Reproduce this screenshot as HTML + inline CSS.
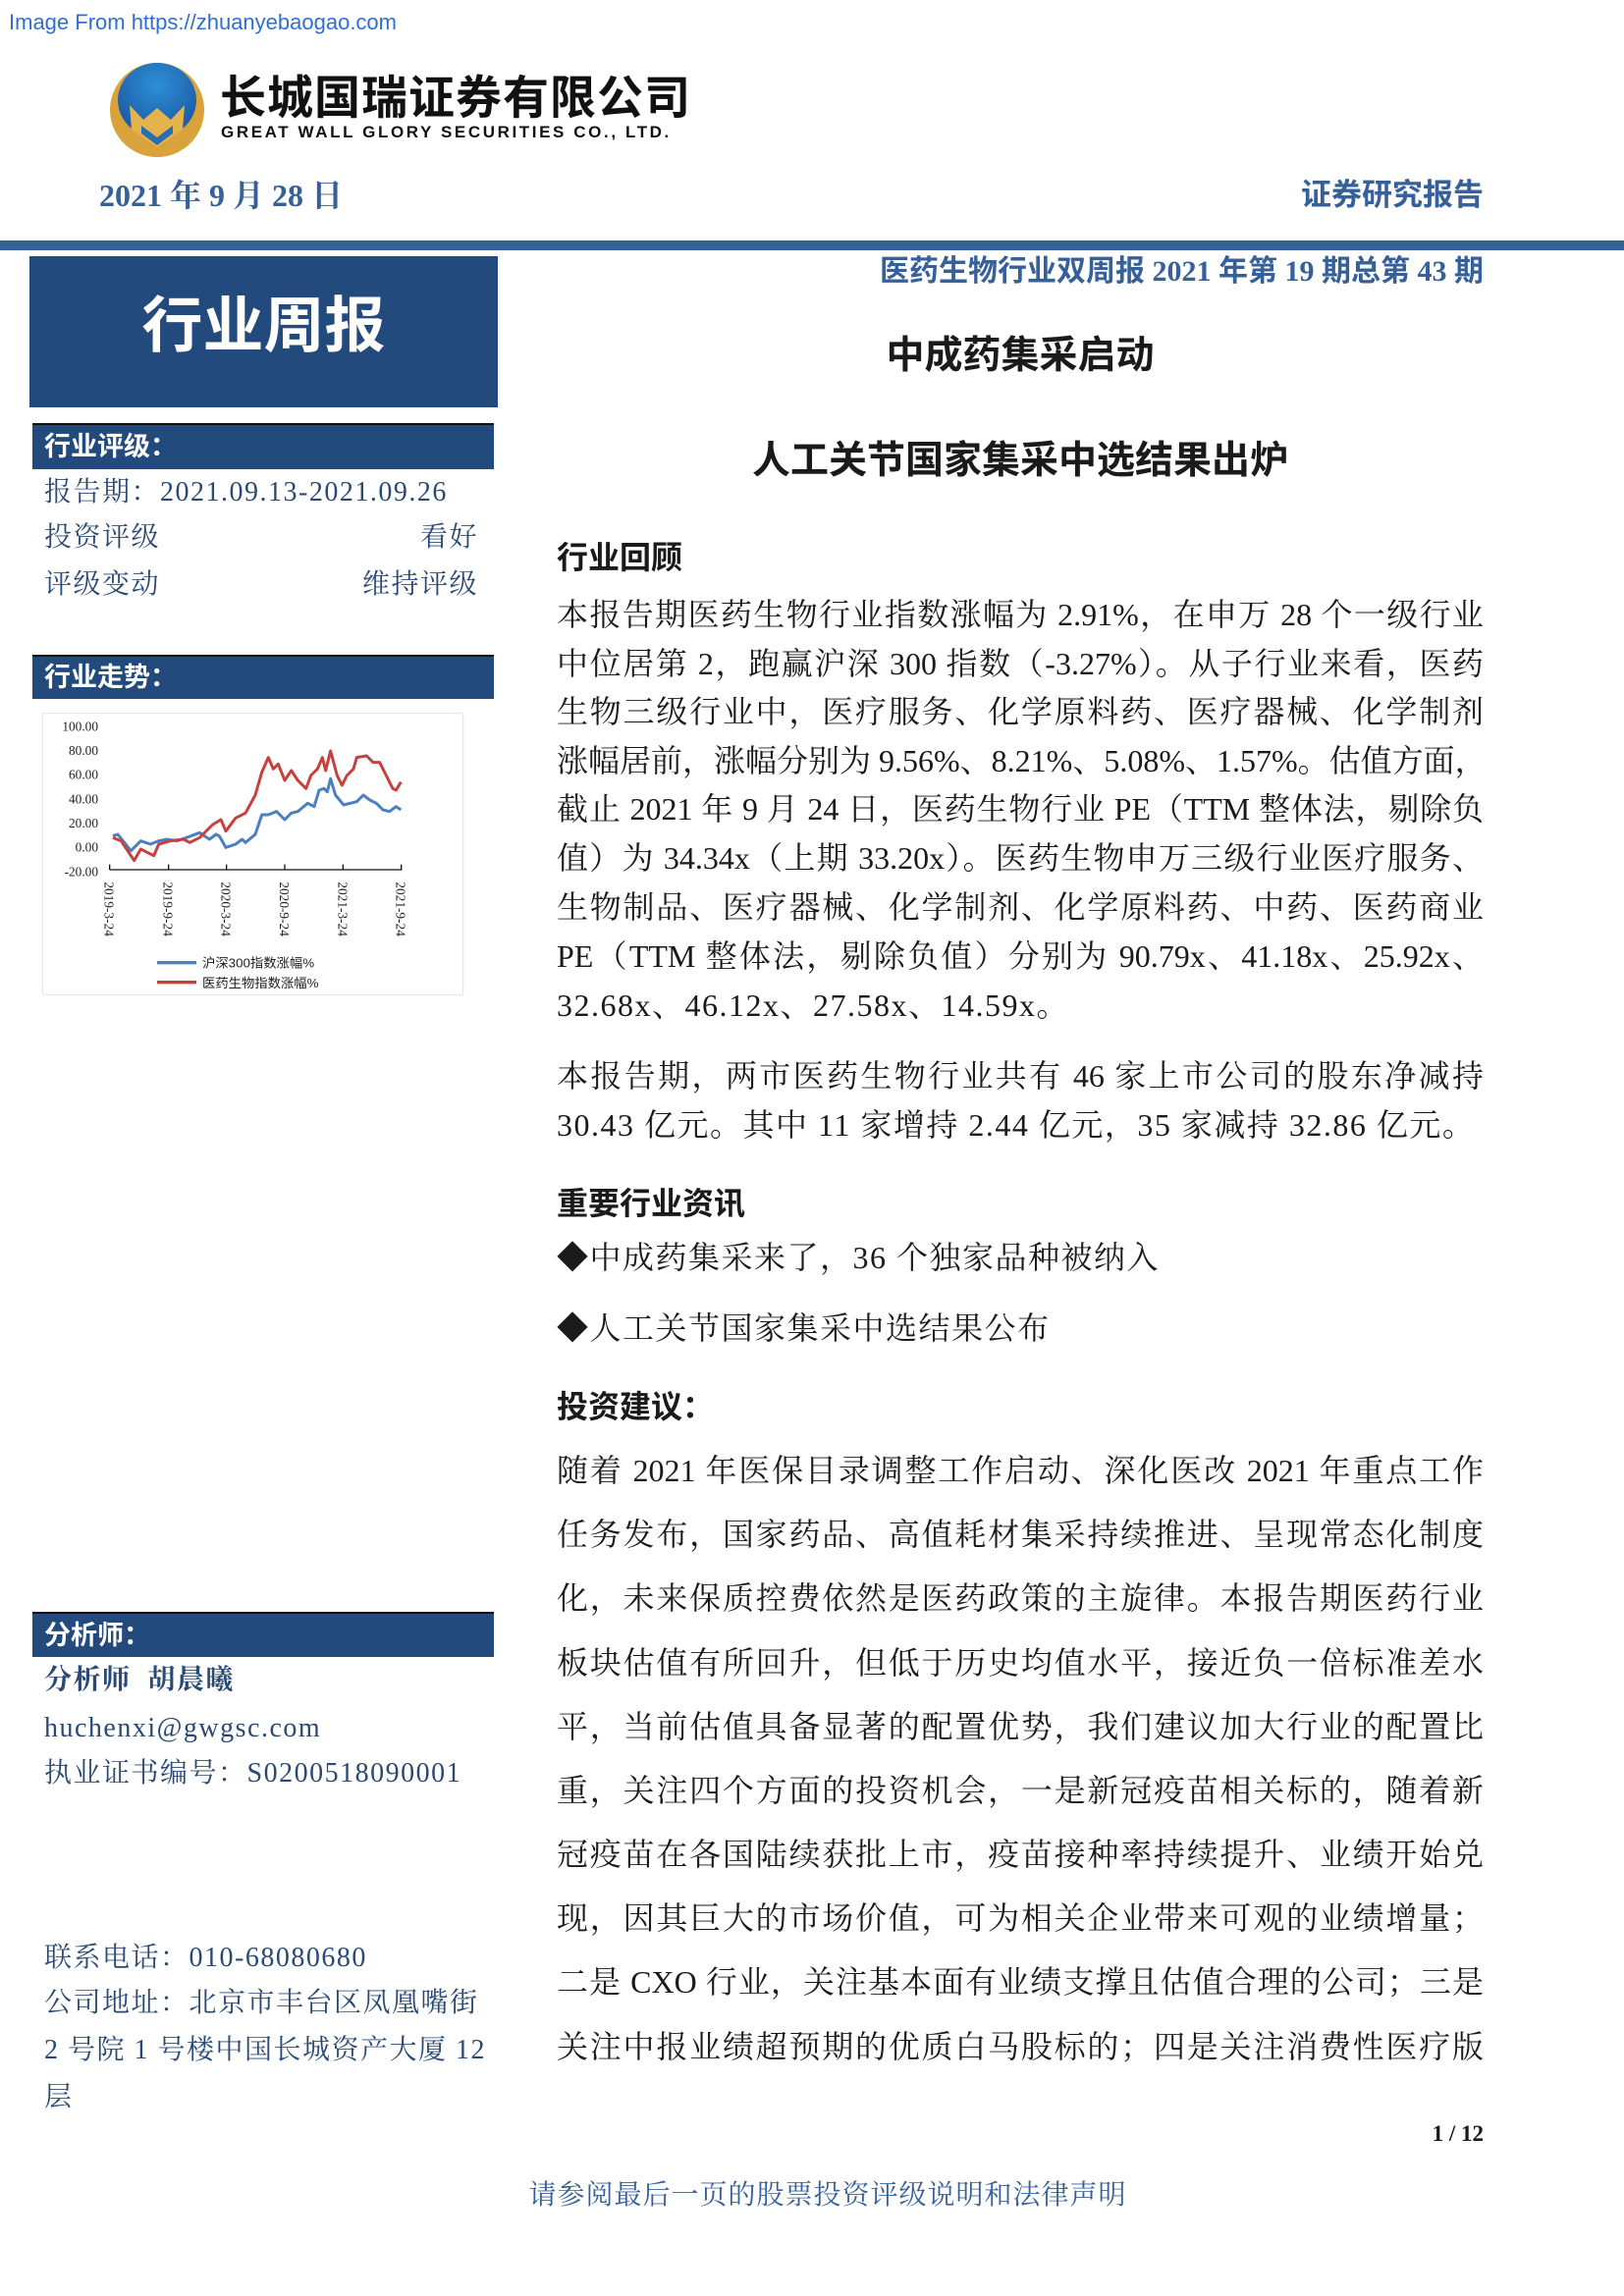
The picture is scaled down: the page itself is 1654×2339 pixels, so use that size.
<!DOCTYPE html>
<html><head><meta charset="utf-8"><style>
*{margin:0;padding:0;box-sizing:border-box}
body{width:1654px;height:2339px;background:#fff;position:relative;overflow:hidden;font-family:"Liberation Serif","Noto Serif CJK SC",serif;color:#1a1a1a}
.a{position:absolute;white-space:nowrap;line-height:1.2}
.sans{font-family:"Liberation Sans","Noto Sans CJK SC",sans-serif}
.bar{position:absolute;left:33px;width:470px;background:#234a7c;border-top:2px solid #111;color:#fff;font-family:"Liberation Sans","Noto Sans CJK SC",sans-serif;font-weight:bold;font-size:27px;padding-left:12px}
.lt{position:absolute;left:45px;font-size:28px;letter-spacing:1.5px;color:#2a4a75;white-space:nowrap;line-height:34px}
.ln{position:absolute;left:567px;width:944px;font-size:32px;text-align:justify;text-align-last:justify;white-space:nowrap;line-height:40px}
.ln.e{text-align-last:left;letter-spacing:1.5px}
.h{position:absolute;left:567px;font-family:"Liberation Sans","Noto Sans CJK SC",sans-serif;font-weight:bold;font-size:32px;line-height:40px}
</style></head><body>
<div class="a sans" style="left:9px;top:10px;font-size:22px;color:#2f6fd0">Image From https://zhuanyebaogao.com</div>
<svg class="a" style="left:110px;top:62px" width="100" height="100" viewBox="0 0 100 100">
<defs><radialGradient id="g" cx="50%" cy="30%" r="60%"><stop offset="0" stop-color="#2d8fd6"/><stop offset="1" stop-color="#1d5fa8"/></radialGradient></defs>
<circle cx="50" cy="50" r="48" fill="#d9a23a"/>
<ellipse cx="50" cy="40" rx="40" ry="38" fill="url(#g)"/>
<path d="M22 45 L36 60 L50 48 L64 60 L78 45 L76 70 L50 88 L24 70Z" fill="#e3b44c"/>
<path d="M34 66 L50 78 L66 66 L66 74 L50 86 L34 74Z" fill="#2a6db5"/>
</svg>
<div class="a sans" style="left:224px;top:76px;font-size:47px;line-height:48px;font-weight:bold;letter-spacing:1px;color:#111">长城国瑞证券有限公司</div>
<div class="a sans" style="left:225px;top:126px;font-size:17px;line-height:18px;font-weight:bold;letter-spacing:2.6px;color:#111">GREAT WALL GLORY SECURITIES CO., LTD.</div>
<div class="a" style="left:101px;top:180px;font-size:32px;font-weight:bold;color:#36609a">2021 年 9 月 28 日</div>
<div class="a sans" style="right:143px;top:180px;font-size:31px;font-weight:bold;color:#36609a">证券研究报告</div>
<div class="a" style="left:0;top:245px;width:1654px;height:10px;background:#36609a"></div>
<div class="a" style="left:30px;top:261px;width:477px;height:154px;background:#234a7c"></div>
<div class="a sans" style="left:30px;top:296px;width:477px;text-align:center;font-size:62px;font-weight:bold;color:#fff">行业周报</div>
<div class="a" style="right:143px;top:259px;font-size:30px;font-weight:bold;color:#36609a;font-family:'Liberation Serif','Noto Sans CJK SC',serif">医药生物行业双周报 2021 年第 19 期总第 43 期</div>
<div class="a sans" style="left:567px;width:944px;top:340px;text-align:center;font-size:39px;font-weight:bold">中成药集采启动</div>
<div class="a sans" style="left:567px;width:944px;top:447px;text-align:center;font-size:39px;font-weight:bold">人工关节国家集采中选结果出炉</div>

<div class="bar" style="top:431px;height:47px;line-height:45px">行业评级：</div>
<div class="lt" style="top:485px">报告期：2021.09.13-2021.09.26</div>
<div class="lt" style="top:531px">投资评级</div><div class="lt" style="top:531px;left:auto;right:1167px">看好</div>
<div class="lt" style="top:579px">评级变动</div><div class="lt" style="top:579px;left:auto;right:1167px">维持评级</div>

<div class="bar" style="top:667px;height:45px;line-height:43px">行业走势：</div>
<svg class="a" style="left:30px;top:700px" width="460" height="330" viewBox="0 0 1380 990">
<rect x="40" y="80" width="1285" height="860" fill="#fff" stroke="#e4e4e4" stroke-width="3"/>
<g font-family="Liberation Serif,serif" font-size="40" fill="#222" text-anchor="end">
<text x="210" y="133">100.00</text><text x="210" y="207">80.00</text><text x="210" y="281">60.00</text><text x="210" y="355">40.00</text><text x="210" y="429">20.00</text><text x="210" y="503">0.00</text><text x="210" y="577">-20.00</text></g>
<path d="M245 558 H1138 M245 542v16 M425 542v16 M602 542v16 M780 542v16 M958 542v16 M1136 542v16" stroke="#111" stroke-width="4" fill="none"/>
<g font-family="Liberation Serif,serif" font-size="40" fill="#222">
<text transform="translate(230,595) rotate(90)">2019-3-24</text><text transform="translate(410,595) rotate(90)">2019-9-24</text><text transform="translate(587,595) rotate(90)">2020-3-24</text><text transform="translate(765,595) rotate(90)">2020-9-24</text><text transform="translate(943,595) rotate(90)">2021-3-24</text><text transform="translate(1121,595) rotate(90)">2021-9-24</text></g>
<polyline fill="none" stroke="#4a7fc0" stroke-width="9" stroke-linejoin="round" points="255,455 270,450 310,500 340,470 370,480 395,470 420,465 450,470 480,460 520,445 550,465 570,450 580,455 600,490 630,480 650,465 660,475 690,450 710,390 730,390 755,380 780,405 800,385 820,380 850,355 870,365 885,315 900,310 910,320 920,280 935,330 960,360 980,355 1000,350 1020,330 1040,345 1060,355 1080,375 1100,380 1120,365 1135,375"/>
<polyline fill="none" stroke="#c8403e" stroke-width="9" stroke-linejoin="round" points="255,460 280,470 320,530 340,495 380,515 395,480 430,470 470,465 490,475 520,460 560,420 585,405 600,440 630,400 660,385 690,330 710,260 730,215 745,250 760,235 780,285 800,255 820,285 845,310 860,270 880,250 895,215 905,255 920,195 940,270 955,300 970,270 990,250 1000,215 1030,210 1050,230 1070,230 1090,270 1110,310 1120,315 1135,290"/>
<path d="M390 842h120" stroke="#4a7fc0" stroke-width="10"/><path d="M390 902h120" stroke="#c8403e" stroke-width="10"/>
<g font-family="Liberation Sans,Noto Sans CJK SC,sans-serif" font-size="40" fill="#222"><text x="528" y="857">沪深300指数涨幅%</text><text x="528" y="918">医药生物指数涨幅%</text></g>
</svg>

<div class="bar" style="top:1642px;height:46px;line-height:44px">分析师：</div>
<div class="lt" style="top:1695px;font-weight:bold">分析师&nbsp;&nbsp;胡晨曦</div>
<div class="lt" style="top:1744px">huchenxi@gwgsc.com</div>
<div class="lt" style="top:1790px">执业证书编号：S0200518090001</div>
<div class="lt" style="top:1978px">联系电话：010-68080680</div>
<div class="lt" style="top:2024px">公司地址：北京市丰台区凤凰嘴街</div>
<div class="lt" style="top:2072px">2 号院 1 号楼中国长城资产大厦 12</div>
<div class="lt" style="top:2120px">层</div>

<div class="h" style="top:548px">行业回顾</div>
<div class="ln" style="top:606px">本报告期医药生物行业指数涨幅为 2.91%，在申万 28 个一级行业</div>
<div class="ln" style="top:656px">中位居第 2，跑赢沪深 300 指数（-3.27%）。从子行业来看，医药</div>
<div class="ln" style="top:705px">生物三级行业中，医疗服务、化学原料药、医疗器械、化学制剂</div>
<div class="ln" style="top:755px">涨幅居前，涨幅分别为 9.56%、8.21%、5.08%、1.57%。估值方面，</div>
<div class="ln" style="top:804px">截止 2021 年 9 月 24 日，医药生物行业 PE（TTM 整体法，剔除负</div>
<div class="ln" style="top:854px">值）为 34.34x（上期 33.20x）。医药生物申万三级行业医疗服务、</div>
<div class="ln" style="top:904px">生物制品、医疗器械、化学制剂、化学原料药、中药、医药商业</div>
<div class="ln" style="top:954px">PE（TTM 整体法，剔除负值）分别为 90.79x、41.18x、25.92x、</div>
<div class="ln e" style="top:1004px">32.68x、46.12x、27.58x、14.59x。</div>
<div class="ln" style="top:1076px">本报告期，两市医药生物行业共有 46 家上市公司的股东净减持</div>
<div class="ln e" style="top:1126px">30.43 亿元。其中 11 家增持 2.44 亿元，35 家减持 32.86 亿元。</div>
<div class="h" style="top:1206px">重要行业资讯</div>
<div class="ln e" style="top:1261px">◆中成药集采来了，36 个独家品种被纳入</div>
<div class="ln e" style="top:1333px">◆人工关节国家集采中选结果公布</div>
<div class="h" style="top:1413px">投资建议：</div>
<div class="ln" style="top:1478px">随着 2021 年医保目录调整工作启动、深化医改 2021 年重点工作</div>
<div class="ln" style="top:1543px">任务发布，国家药品、高值耗材集采持续推进、呈现常态化制度</div>
<div class="ln" style="top:1608px">化，未来保质控费依然是医药政策的主旋律。本报告期医药行业</div>
<div class="ln" style="top:1674px">板块估值有所回升，但低于历史均值水平，接近负一倍标准差水</div>
<div class="ln" style="top:1739px">平，当前估值具备显著的配置优势，我们建议加大行业的配置比</div>
<div class="ln" style="top:1804px">重，关注四个方面的投资机会，一是新冠疫苗相关标的，随着新</div>
<div class="ln" style="top:1869px">冠疫苗在各国陆续获批上市，疫苗接种率持续提升、业绩开始兑</div>
<div class="ln" style="top:1934px">现，因其巨大的市场价值，可为相关企业带来可观的业绩增量；</div>
<div class="ln" style="top:1999px">二是 CXO 行业，关注基本面有业绩支撑且估值合理的公司；三是</div>
<div class="ln" style="top:2065px">关注中报业绩超预期的优质白马股标的；四是关注消费性医疗版</div>
<div class="a" style="right:143px;top:2160px;font-size:23px;font-weight:bold">1 / 12</div>
<div class="a" style="left:0;width:1686px;top:2220px;text-align:center;font-size:28px;letter-spacing:1px;color:#36609a">请参阅最后一页的股票投资评级说明和法律声明</div>
</body></html>
